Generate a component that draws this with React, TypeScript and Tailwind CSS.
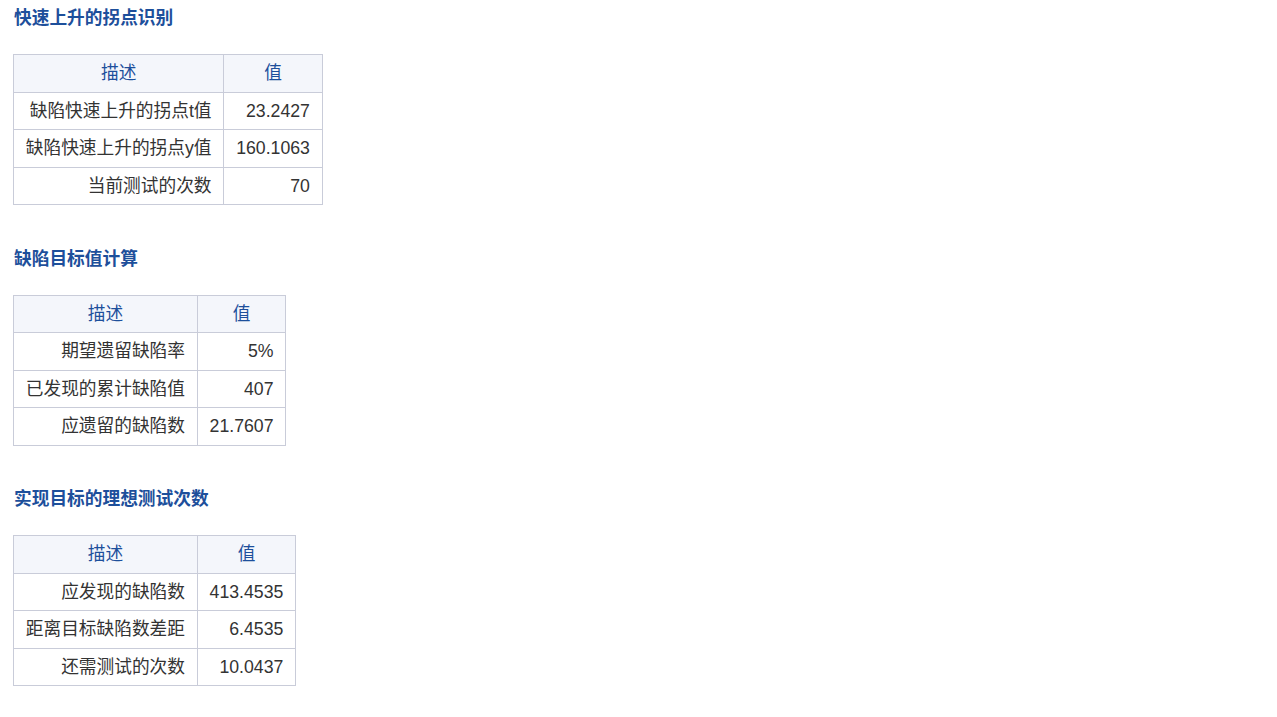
import React from "react";

type Row = [string, string];

const sections: { title: string; rows: Row[] }[] = [
  {
    title: "快速上升的拐点识别",
    rows: [
      ["缺陷快速上升的拐点t值", "23.2427"],
      ["缺陷快速上升的拐点y值", "160.1063"],
      ["当前测试的次数", "70"],
    ],
  },
  {
    title: "缺陷目标值计算",
    rows: [
      ["期望遗留缺陷率", "5%"],
      ["已发现的累计缺陷值", "407"],
      ["应遗留的缺陷数", "21.7607"],
    ],
  },
  {
    title: "实现目标的理想测试次数",
    rows: [
      ["应发现的缺陷数", "413.4535"],
      ["距离目标缺陷数差距", "6.4535"],
      ["还需测试的次数", "10.0437"],
    ],
  },
];

export default function App() {
  return (
    <div
      className="min-h-[717px] bg-white pl-[13px] pt-[7px] text-[17.7px]"
      style={{ fontFamily: '"Liberation Sans", "Noto Sans CJK SC", Arial, sans-serif' }}
    >
      {sections.map((s, i) => (
        <section key={i} className={i > 0 ? "mt-[42.5px]" : ""}>
          <h2 className="pl-[1px] font-bold leading-[22px] text-[#1d4f9b] mb-[25px]">{s.title}</h2>
          <table className="border-collapse border border-[#c9ccd9]">
            <thead>
              <tr className="bg-[#f4f6fb] text-[#1d4f9b]">
                <th className="border border-[#c9ccd9] px-[11.8px] py-2 font-normal leading-[20.5px] text-center">描述</th>
                <th className="border border-[#c9ccd9] px-[11.8px] py-2 font-normal leading-[20.5px] text-center">值</th>
              </tr>
            </thead>
            <tbody>
              {s.rows.map((r, j) => (
                <tr key={j} className="text-[#333333]">
                  <td className="whitespace-nowrap border border-[#c9ccd9] px-[11.8px] py-2 text-right leading-[20.5px]">{r[0]}</td>
                  <td className="whitespace-nowrap border border-[#c9ccd9] px-[11.8px] py-2 text-right leading-[20.5px]">{r[1]}</td>
                </tr>
              ))}
            </tbody>
          </table>
        </section>
      ))}
    </div>
  );
}
